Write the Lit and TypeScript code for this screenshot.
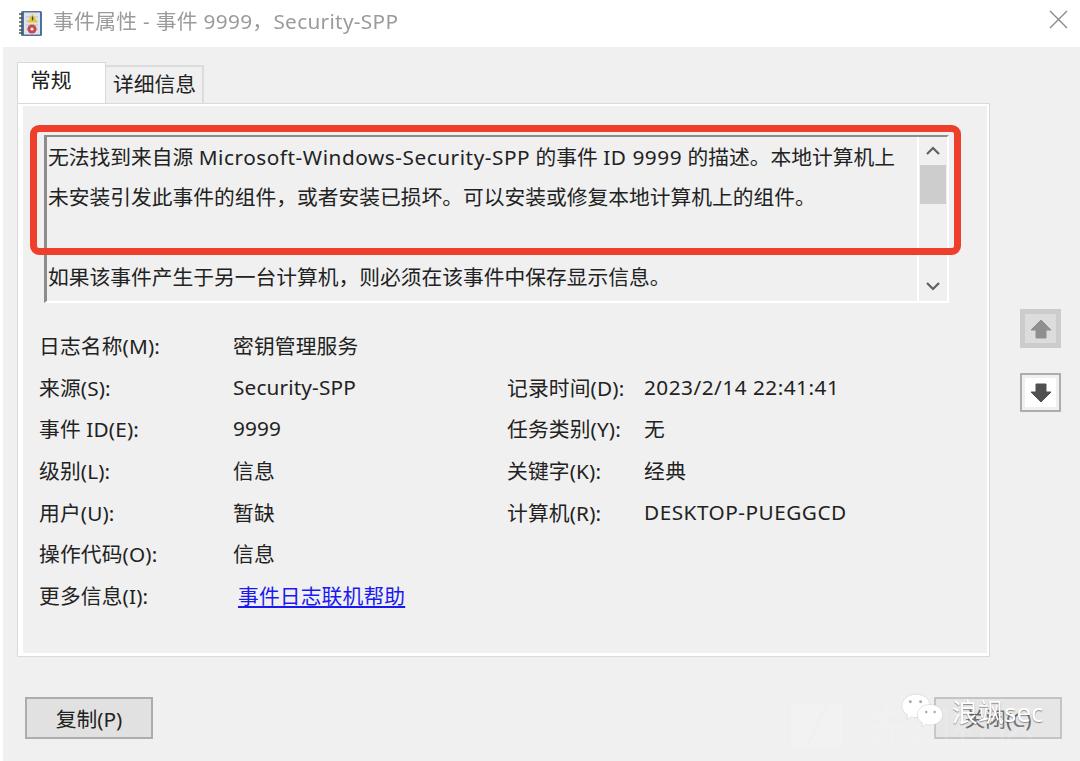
import { LitElement, css, html } from "lit";
import { customElement } from "lit/decorators.js";

const fields = [
  ["日志名称(M):", "密钥管理服务", "", ""],
  ["来源(S):", "Security-SPP", "记录时间(D):", "2023/2/14 22:41:41"],
  ["事件 ID(E):", "9999", "任务类别(Y):", "无"],
  ["级别(L):", "信息", "关键字(K):", "经典"],
  ["用户(U):", "暂缺", "计算机(R):", "DESKTOP-PUEGGCD"],
  ["操作代码(O):", "信息", "", ""],
];

@customElement("app-root")
export class AppRoot extends LitElement {
  static styles = css`
    :host {
      display: block;
      position: relative;
      width: 1080px;
      height: 761px;
      overflow: hidden;
      background: #ffffff;
      font-family: "Noto Sans", "Noto Sans CJK SC", sans-serif;
      font-size: 20.75px;
      color: #222222;
    }

    .dialog {
      filter: blur(0.6px);
    }

    .titlebar {
      height: 47px;
      display: flex;
      align-items: center;
      padding-left: 18px;
      color: #9b9b9b;
    }

    .title {
      margin-left: 10px;
      position: relative;
      top: -4px;
      white-space: nowrap;
      letter-spacing: 0.32px;
    }

    .close {
      margin-left: auto;
      margin-right: 12px;
      position: relative;
      top: -4px;
    }

    .content {
      margin-left: 3px;
      height: 714px;
      background: #f0f0f0;
    }

    .main {
      display: flex;
      padding: 15px 0 0 14px;
    }

    .tabs {
      display: flex;
      align-items: flex-end;
      height: 41px;
    }

    .tab {
      box-sizing: border-box;
      line-height: 1;
      white-space: nowrap;
    }

    .tab.current {
      width: 89px;
      height: 41px;
      padding: 7px 0 0 12px;
      background: #ffffff;
      border: 1px solid #d9d9d9;
      border-bottom: none;
    }

    .tab.other {
      width: 98px;
      height: 38px;
      padding: 7px 0 0 7px;
      background: #f0f0f0;
      border: 2px solid #dcdcdc;
      border-left: none;
      border-bottom: none;
    }

    .panel {
      box-sizing: border-box;
      width: 973px;
      height: 554px;
      padding: 29px 0 0 21px;
      outline: 1px solid #dadada;
      outline-offset: -1px;
      border: 3px solid #ffffff;
      border-left-width: 6px;
      border-bottom-width: 4px;
    }

    .desc {
      box-sizing: border-box;
      width: 905px;
      height: 168px;
      display: flex;
      border-left: 3px solid #8c8c8c;
      border-top: 2px solid #8c8c8c;
      border-right: 2px solid #ffffff;
      border-bottom: 2px solid #ffffff;
    }

    .desc-text {
      flex: 1;
      padding: 1px 0 0 1px;
      overflow: hidden;
    }

    .desc-line {
      height: 40px;
      line-height: 39px;
      white-space: nowrap;
    }

    .latin {
      letter-spacing: 0.55px;
    }

    .scrollbar {
      width: 28px;
      display: flex;
      flex-direction: column;
      align-items: center;
      border-left: 2px solid #ffffff;
      padding-top: 8px;
    }

    .thumb {
      width: 26px;
      height: 39px;
      margin-top: 8px;
      background: #cdcdcd;
    }

    .down {
      margin-top: auto;
      margin-bottom: 3px;
    }

    .fields {
      display: grid;
      grid-template-columns: 194px 274px 137px 1fr;
      grid-auto-rows: 41.7px;
      align-items: center;
      margin: 21px 0 0 -5px;
      white-space: nowrap;
      letter-spacing: 0.15px;
    }

    .fields .right-value {
      letter-spacing: 0.5px;
    }

    .link {
      margin-left: 5px;
      color: #1a1aee;
      text-decoration: underline;
    }

    .side {
      display: flex;
      flex-direction: column;
      gap: 25px;
      margin: 247px 0 0 30px;
    }

    .arrow-btn {
      box-sizing: border-box;
      width: 41px;
      height: 39px;
      display: flex;
      align-items: center;
      justify-content: center;
    }

    .arrow-btn.disabled {
      background: #dcdcdc;
      border: 5px solid #cccccc;
    }

    .arrow-btn.enabled {
      background: #ffffff;
      border: 2px solid #adadad;
      box-shadow: inset 0 0 0 3px #f0f0f0;
    }

    .footer {
      display: flex;
      justify-content: space-between;
      width: 1037px;
      margin: 40px 0 0 22px;
    }

    .btn {
      box-sizing: border-box;
      width: 128px;
      height: 42px;
      display: flex;
      align-items: center;
      justify-content: center;
      background: #e1e1e1;
      border: 2px solid #adadad;
      white-space: nowrap;
    }

    .btn.faded {
      background: #e6e6e6;
      border-color: #c4c4c4;
      color: #6a6a6a;
    }

    .highlight {
      position: absolute;
      left: 30px;
      top: 125px;
      box-sizing: border-box;
      width: 931px;
      height: 130px;
      border: 7px solid #ee3f2d;
      border-radius: 9px;
      filter: blur(0.5px);
    }

    .ghost {
      position: absolute;
      left: 790px;
      top: 703px;
    }

    .ghost-text {
      position: absolute;
      left: 864px;
      top: 692px;
      font-size: 44px;
      color: rgba(255, 255, 255, 0.12);
      white-space: nowrap;
    }

    .watermark {
      position: absolute;
      left: 901px;
      top: 692px;
      display: flex;
      align-items: center;
      gap: 8px;
      color: #ffffff;
      font-size: 26px;
      white-space: nowrap;
      text-shadow: 0 1px 1px rgba(60, 60, 60, 0.55);
    }
  `;

  private renderBookIcon() {
    return html`<svg class="book" width="25" height="27" viewBox="0 0 25 27">
      <rect x="3" y="1" width="21" height="25" rx="1.500" fill="#4f6f9c" />
      <rect x="6" y="2.500" width="16" height="22" fill="#dfe4ea" />
      <path d="M8 7h12M8 11h12M8 15h12M8 19h12" stroke="#b4c0d0" stroke-width="1" />
      <path d="M1 4h4M1 8h4M1 12h4M1 16h4M1 20h4M1 23h4" stroke="#555" stroke-width="1.600" />
      <path d="M14.500 3.500l5 9h-10z" fill="#eac62e" />
      <rect x="13.900" y="6.500" width="1.300" height="3.800" fill="#444" />
      <circle cx="14" cy="19" r="4.600" fill="#c9484f" />
      <circle cx="14" cy="19" r="1.600" fill="#eeeeee" />
    </svg>`;
  }

  private renderChevron(up: boolean) {
    const d = up ? "M1 9l6-6 6 6" : "M1 3l6 6 6-6";
    return html`<svg width="14" height="12" viewBox="0 0 14 12">
      <path d=${d} fill="none" stroke="#606060" stroke-width="2.200" />
    </svg>`;
  }

  private renderArrow(up: boolean, fill: string) {
    const d = up
      ? "M11 1l10 10h-5v8h-10v-8h-5z"
      : "M6 1h10v8h5l-10 10-10-10h5z";
    return html`<svg width="22" height="20" viewBox="0 0 22 20">
      <path d=${d} fill=${fill} stroke=${fill} stroke-width="1" stroke-linejoin="round" />
    </svg>`;
  }

  render() {
    return html`
      <div class="dialog">
        <div class="titlebar">
          ${this.renderBookIcon()}
          <span class="title">事件属性 - 事件 9999，Security-SPP</span>
          <svg class="close" width="19" height="19" viewBox="0 0 19 19">
            <path d="M1 1l17 17M18 1l-17 17" stroke="#8a8a8a" stroke-width="1.400" fill="none" />
          </svg>
        </div>
        <div class="content">
          <div class="main">
            <div>
              <div class="tabs">
                <div class="tab current">常规</div>
                <div class="tab other">详细信息</div>
              </div>
              <div class="panel">
                <div class="desc">
                  <div class="desc-text">
                    <div class="desc-line">无法找到来自源 <span class="latin">Microsoft-Windows-Security-SPP</span> 的事件 <span class="latin">ID 9999</span> 的描述。本地计算机上</div>
                    <div class="desc-line">未安装引发此事件的组件，或者安装已损坏。可以安装或修复本地计算机上的组件。</div>
                    <div class="desc-line"></div>
                    <div class="desc-line">如果该事件产生于另一台计算机，则必须在该事件中保存显示信息。</div>
                  </div>
                  <div class="scrollbar">
                    ${this.renderChevron(true)}
                    <div class="thumb"></div>
                    <div class="down">${this.renderChevron(false)}</div>
                  </div>
                </div>
                <div class="fields">
                  ${fields.map((row) =>
                    row.map(
                      (cell, i) =>
                        html`<div class=${i === 3 ? "right-value" : ""}>${cell}</div>`
                    )
                  )}
                  <div>更多信息(I):</div>
                  <div><span class="link">事件日志联机帮助</span></div>
                </div>
              </div>
            </div>
            <div class="side">
              <div class="arrow-btn disabled">${this.renderArrow(true, "#8f8f8f")}</div>
              <div class="arrow-btn enabled">${this.renderArrow(false, "#505050")}</div>
            </div>
          </div>
          <div class="footer">
            <div class="btn">复制(P)</div>
            <div class="btn faded">关闭(C)</div>
          </div>
        </div>
      </div>
      <div class="highlight"></div>
      <svg class="ghost" width="54" height="46" viewBox="0 0 54 46">
        <path d="M1 1h34l-20 44h-14zM38 1h14v44h-33z" fill="#f2f2f2" />
      </svg>
      <div class="ghost-text">先知社区</div>
      <div class="watermark">
        <svg width="43" height="38" viewBox="0 0 46 38">
          <path d="M16 1c8.500 0 15 5.500 15 12.500s-6.500 12.500-15 12.500c-1.800 0-3.500-.2-5-.7l-5 3 1-5c-3.700-2.300-6-5.800-6-9.800 0-7 6.500-12.500 15-12.500z" fill="#ffffff" stroke="#cfcfcf" stroke-width=".6" />
          <path d="M31 12c7.500 0 13.500 4.800 13.500 11s-6 11-13.500 11c-1.500 0-3-.2-4.300-.6l-4.700 2.600.9-4.200c-3.300-2-5.400-5.200-5.400-8.800 0-6.200 6-11 13.500-11z" fill="#ffffff" stroke="#cfcfcf" stroke-width=".6" />
          <circle cx="10" cy="9" r="1.600" fill="#a8a8a8" />
          <circle cx="21" cy="9" r="1.600" fill="#a8a8a8" />
          <circle cx="27" cy="20" r="1.300" fill="#a8a8a8" />
          <circle cx="36" cy="20" r="1.300" fill="#a8a8a8" />
        </svg>
        <span>浪飒sec</span>
      </div>
    `;
  }
}
